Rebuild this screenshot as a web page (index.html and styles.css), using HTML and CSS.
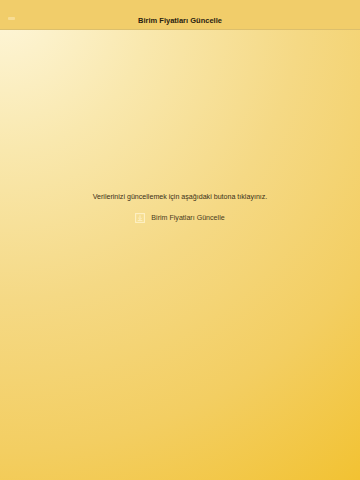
FILE: index.html
```html
<!DOCTYPE html>
<html lang="tr">
<head>
<meta charset="utf-8">
<link rel="stylesheet" href="styles.css">
</head>
<body>
<div class="app">
  <header class="bar">
    <span class="back"></span>
    <h1 class="title">Birim Fiyatları Güncelle</h1>
  </header>
  <main class="content">
    <p class="msg">Verilerinizi güncellemek için aşağıdaki butona tıklayınız.</p>
    <button class="update">
      <svg class="ico" width="10" height="10" viewBox="0 0 10 10" aria-hidden="true">
        <rect x="0.6" y="0.6" width="8.8" height="8.8" fill="none" stroke="#fdf0c4" stroke-width="1.1"/>
        <path d="M5 2.3v4.2M3.2 4.8l1.8 1.8L6.8 4.8M2.6 7.6h4.8" fill="none" stroke="#fdf0c4" stroke-width="1"/>
      </svg>
      <span>Birim Fiyatları Güncelle</span>
    </button>
  </main>
</div>
</body>
</html>
```
FILE: styles.css
```css
* { box-sizing: border-box; }
html, body { margin: 0; padding: 0; }
body {
  width: 360px;
  height: 480px;
  overflow: hidden;
  font-family: "Liberation Sans", Arial, sans-serif;
}
.app {
  width: 360px;
  height: 480px;
  display: flex;
  flex-direction: column;
  background: radial-gradient(farthest-corner circle at 0 0, #fef7dc 0%, #f9e8ae 25%, #f5d985 50%, #f3ce62 75%, #f2c232 100%);
}
.bar {
  position: relative;
  height: 30px;
  flex: 0 0 30px;
  display: flex;
  align-items: center;
  justify-content: center;
  background: #f1cd6a;
  border-bottom: 1px solid #dcbf6c;
  padding-top: 11px;
}
.back {
  position: absolute;
  left: 8px;
  top: 17px;
  width: 7px;
  height: 3px;
  background: rgba(255, 240, 200, 0.45);
  border-radius: 1px;
}
.title {
  margin: 0;
  font-size: 7.5px;
  font-weight: bold;
  color: #2a2210;
}
.content {
  flex: 1;
  display: flex;
  flex-direction: column;
  align-items: center;
  padding-top: 162px;
}
.msg {
  margin: 0;
  font-size: 7.1px;
  color: #3a3018;
  line-height: 10px;
}
.update {
  margin-top: 11px;
  display: flex;
  align-items: center;
  gap: 6px;
  background: none;
  border: 0;
  padding: 0;
  font-family: "Liberation Sans", Arial, sans-serif;
  font-size: 7.1px;
  color: #4a3c1c;
  line-height: 10px;
}
.ico { display: block; }
```
